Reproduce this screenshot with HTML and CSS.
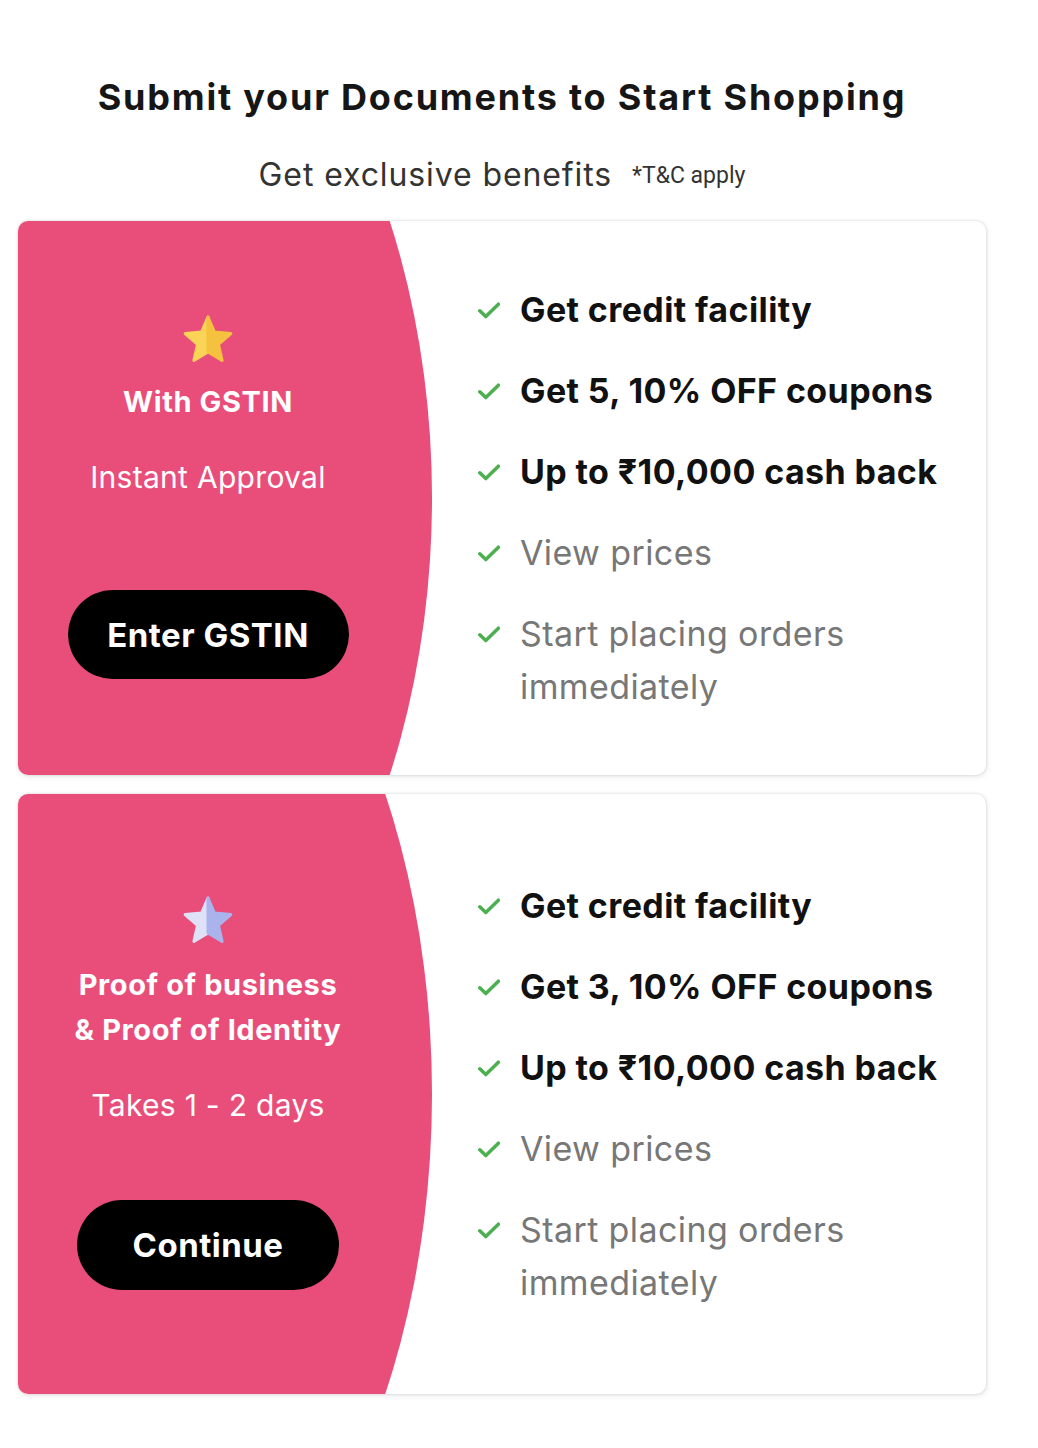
FILE: index.html
```html
<!DOCTYPE html>
<html lang="en">
<head>
<meta charset="utf-8">
<title>Submit your Documents</title>
<link rel="stylesheet" href="styles.css">
</head>
<body>
<div class="page">
  <h1 class="title">Submit your Documents to Start Shopping</h1>
  <p class="subtitle">Get exclusive benefits <span class="tc">*T&amp;C apply</span></p>

  <div class="card card--gstin">
    <div class="side">
      <svg class="star" viewBox="0 0 50 48" width="50" height="48" aria-hidden="true">
        <polygon class="star-l" points="25,2 18.53,17.1 2.17,18.58 14.54,29.4 10.89,45.42 25,37"/>
        <polygon class="star-r" points="25,2 31.47,17.1 47.83,18.58 35.46,29.4 39.11,45.42 25,37"/>
      </svg>
      <div class="side-title">With GSTIN</div>
      <div class="side-sub">Instant Approval</div>
      <button class="btn btn--gstin">Enter GSTIN</button>
    </div>
    <ul class="benefits">
      <li class="strong"><svg class="check" viewBox="0 0 22 17"><path d="M1.8 8.8 L7.8 14.6 L20.4 2.2"/></svg><span>Get credit facility</span></li>
      <li class="strong"><svg class="check" viewBox="0 0 22 17"><path d="M1.8 8.8 L7.8 14.6 L20.4 2.2"/></svg><span>Get 5, 10% OFF coupons</span></li>
      <li class="strong"><svg class="check" viewBox="0 0 22 17"><path d="M1.8 8.8 L7.8 14.6 L20.4 2.2"/></svg><span>Up to ₹10,000 cash back</span></li>
      <li class="muted"><svg class="check" viewBox="0 0 22 17"><path d="M1.8 8.8 L7.8 14.6 L20.4 2.2"/></svg><span>View prices</span></li>
      <li class="muted"><svg class="check" viewBox="0 0 22 17"><path d="M1.8 8.8 L7.8 14.6 L20.4 2.2"/></svg><span>Start placing orders<br>immediately</span></li>
    </ul>
  </div>

  <div class="card card--proof">
    <div class="side">
      <svg class="star star--lilac" viewBox="0 0 50 48" width="50" height="48" aria-hidden="true">
        <polygon class="star-l" points="25,2 18.53,17.1 2.17,18.58 14.54,29.4 10.89,45.42 25,37"/>
        <polygon class="star-r" points="25,2 31.47,17.1 47.83,18.58 35.46,29.4 39.11,45.42 25,37"/>
      </svg>
      <div class="side-title">Proof of business<br>&amp; Proof of Identity</div>
      <div class="side-sub">Takes 1 - 2 days</div>
      <button class="btn btn--continue">Continue</button>
    </div>
    <ul class="benefits">
      <li class="strong"><svg class="check" viewBox="0 0 22 17"><path d="M1.8 8.8 L7.8 14.6 L20.4 2.2"/></svg><span>Get credit facility</span></li>
      <li class="strong"><svg class="check" viewBox="0 0 22 17"><path d="M1.8 8.8 L7.8 14.6 L20.4 2.2"/></svg><span>Get 3, 10% OFF coupons</span></li>
      <li class="strong"><svg class="check" viewBox="0 0 22 17"><path d="M1.8 8.8 L7.8 14.6 L20.4 2.2"/></svg><span>Up to ₹10,000 cash back</span></li>
      <li class="muted"><svg class="check" viewBox="0 0 22 17"><path d="M1.8 8.8 L7.8 14.6 L20.4 2.2"/></svg><span>View prices</span></li>
      <li class="muted"><svg class="check" viewBox="0 0 22 17"><path d="M1.8 8.8 L7.8 14.6 L20.4 2.2"/></svg><span>Start placing orders<br>immediately</span></li>
    </ul>
  </div>
</div>
</body>
</html>
```

FILE: styles.css
```css
* { box-sizing: border-box; }

body {
  margin: 0;
  background: #ffffff;
  font-family: "Inter", "Lato", "Noto Sans", "Liberation Sans", sans-serif;
  color: #111;
}

.page {
  width: 968px;
  margin-left: 18px;
  padding-top: 72px;
}

.title {
  margin: 0;
  text-align: center;
  font-size: 36px;
  line-height: 50px;
  font-weight: 700;
  letter-spacing: 1.8px;
  color: #161616;
}

.subtitle {
  margin: 33px 0 22px;
  text-align: center;
  font-size: 32px;
  line-height: 40px;
  letter-spacing: 0.9px;
  color: #333;
  font-weight: 400;
}

.tc {
  font-family: "Roboto", "Liberation Sans", sans-serif;
  font-size: 23px;
  letter-spacing: 0;
  color: #333;
  margin-left: 10px;
  position: relative;
  top: -3px;
}

.card {
  display: flex;
  background: #fff;
  border-radius: 10px;
  overflow: hidden;
  box-shadow: 0 0 3px rgba(0, 0, 0, 0.16), 1px 2px 6px rgba(0, 0, 0, 0.08);
  margin-bottom: 19px;
}

.side {
  flex: none;
  width: 414px;
  padding-right: 34px;
  background: #e94e7a;
  display: flex;
  flex-direction: column;
  align-items: center;
  text-align: center;
  color: #fff;
}

.card--gstin .side {
  clip-path: ellipse(414px 629px at 0 50%);
  padding-top: 94px;
  padding-bottom: 96px;
}

.card--proof .side {
  clip-path: ellipse(414px 650px at 0 50%);
  padding-top: 102px;
  padding-bottom: 104px;
}

.star {
  display: block;
  width: 50px;
  height: 48px;
}

.star polygon {
  stroke-width: 3;
  stroke-linejoin: round;
}

.star-l { fill: #fbd457; stroke: #fbd457; }
.star-r { fill: #f4c23f; stroke: #f4c23f; }

.star--lilac .star-l { fill: #dfe2f7; stroke: #dfe2f7; }
.star--lilac .star-r { fill: #aab3ec; stroke: #aab3ec; }

.side-title {
  margin-top: 16px;
  font-size: 29px;
  line-height: 45px;
  font-weight: 700;
  letter-spacing: 0.6px;
}

.card--proof .side-title { margin-top: 18px; }

.side-sub {
  margin-top: 31px;
  font-size: 30px;
  line-height: 44px;
  font-weight: 400;
  letter-spacing: 0.3px;
}

.btn {
  border: 0;
  background: #000;
  color: #fff;
  font-family: inherit;
  font-weight: 700;
  font-size: 33px;
  letter-spacing: 0.5px;
  border-radius: 46px;
  padding: 0;
}

.btn--gstin {
  margin-top: 91px;
  width: 281px;
  height: 89px;
}

.btn--continue {
  margin-top: 73px;
  width: 262px;
  height: 90px;
}

.benefits {
  list-style: none;
  margin: 0;
  padding: 0 0 0 46px;
  display: flex;
  flex-direction: column;
  justify-content: center;
  gap: 28px;
}

.benefits li {
  display: flex;
  align-items: flex-start;
  font-size: 34px;
  line-height: 53px;
  letter-spacing: 0.4px;
}

.check {
  flex: none;
  width: 22px;
  height: 17px;
  margin-top: 19px;
  margin-right: 20px;
  fill: none;
  stroke: #4caf50;
  stroke-width: 3.5;
  stroke-linecap: round;
  stroke-linejoin: round;
}

.strong {
  font-weight: 700;
  color: #111;
}

.muted {
  font-weight: 400;
  color: #777;
}
```
